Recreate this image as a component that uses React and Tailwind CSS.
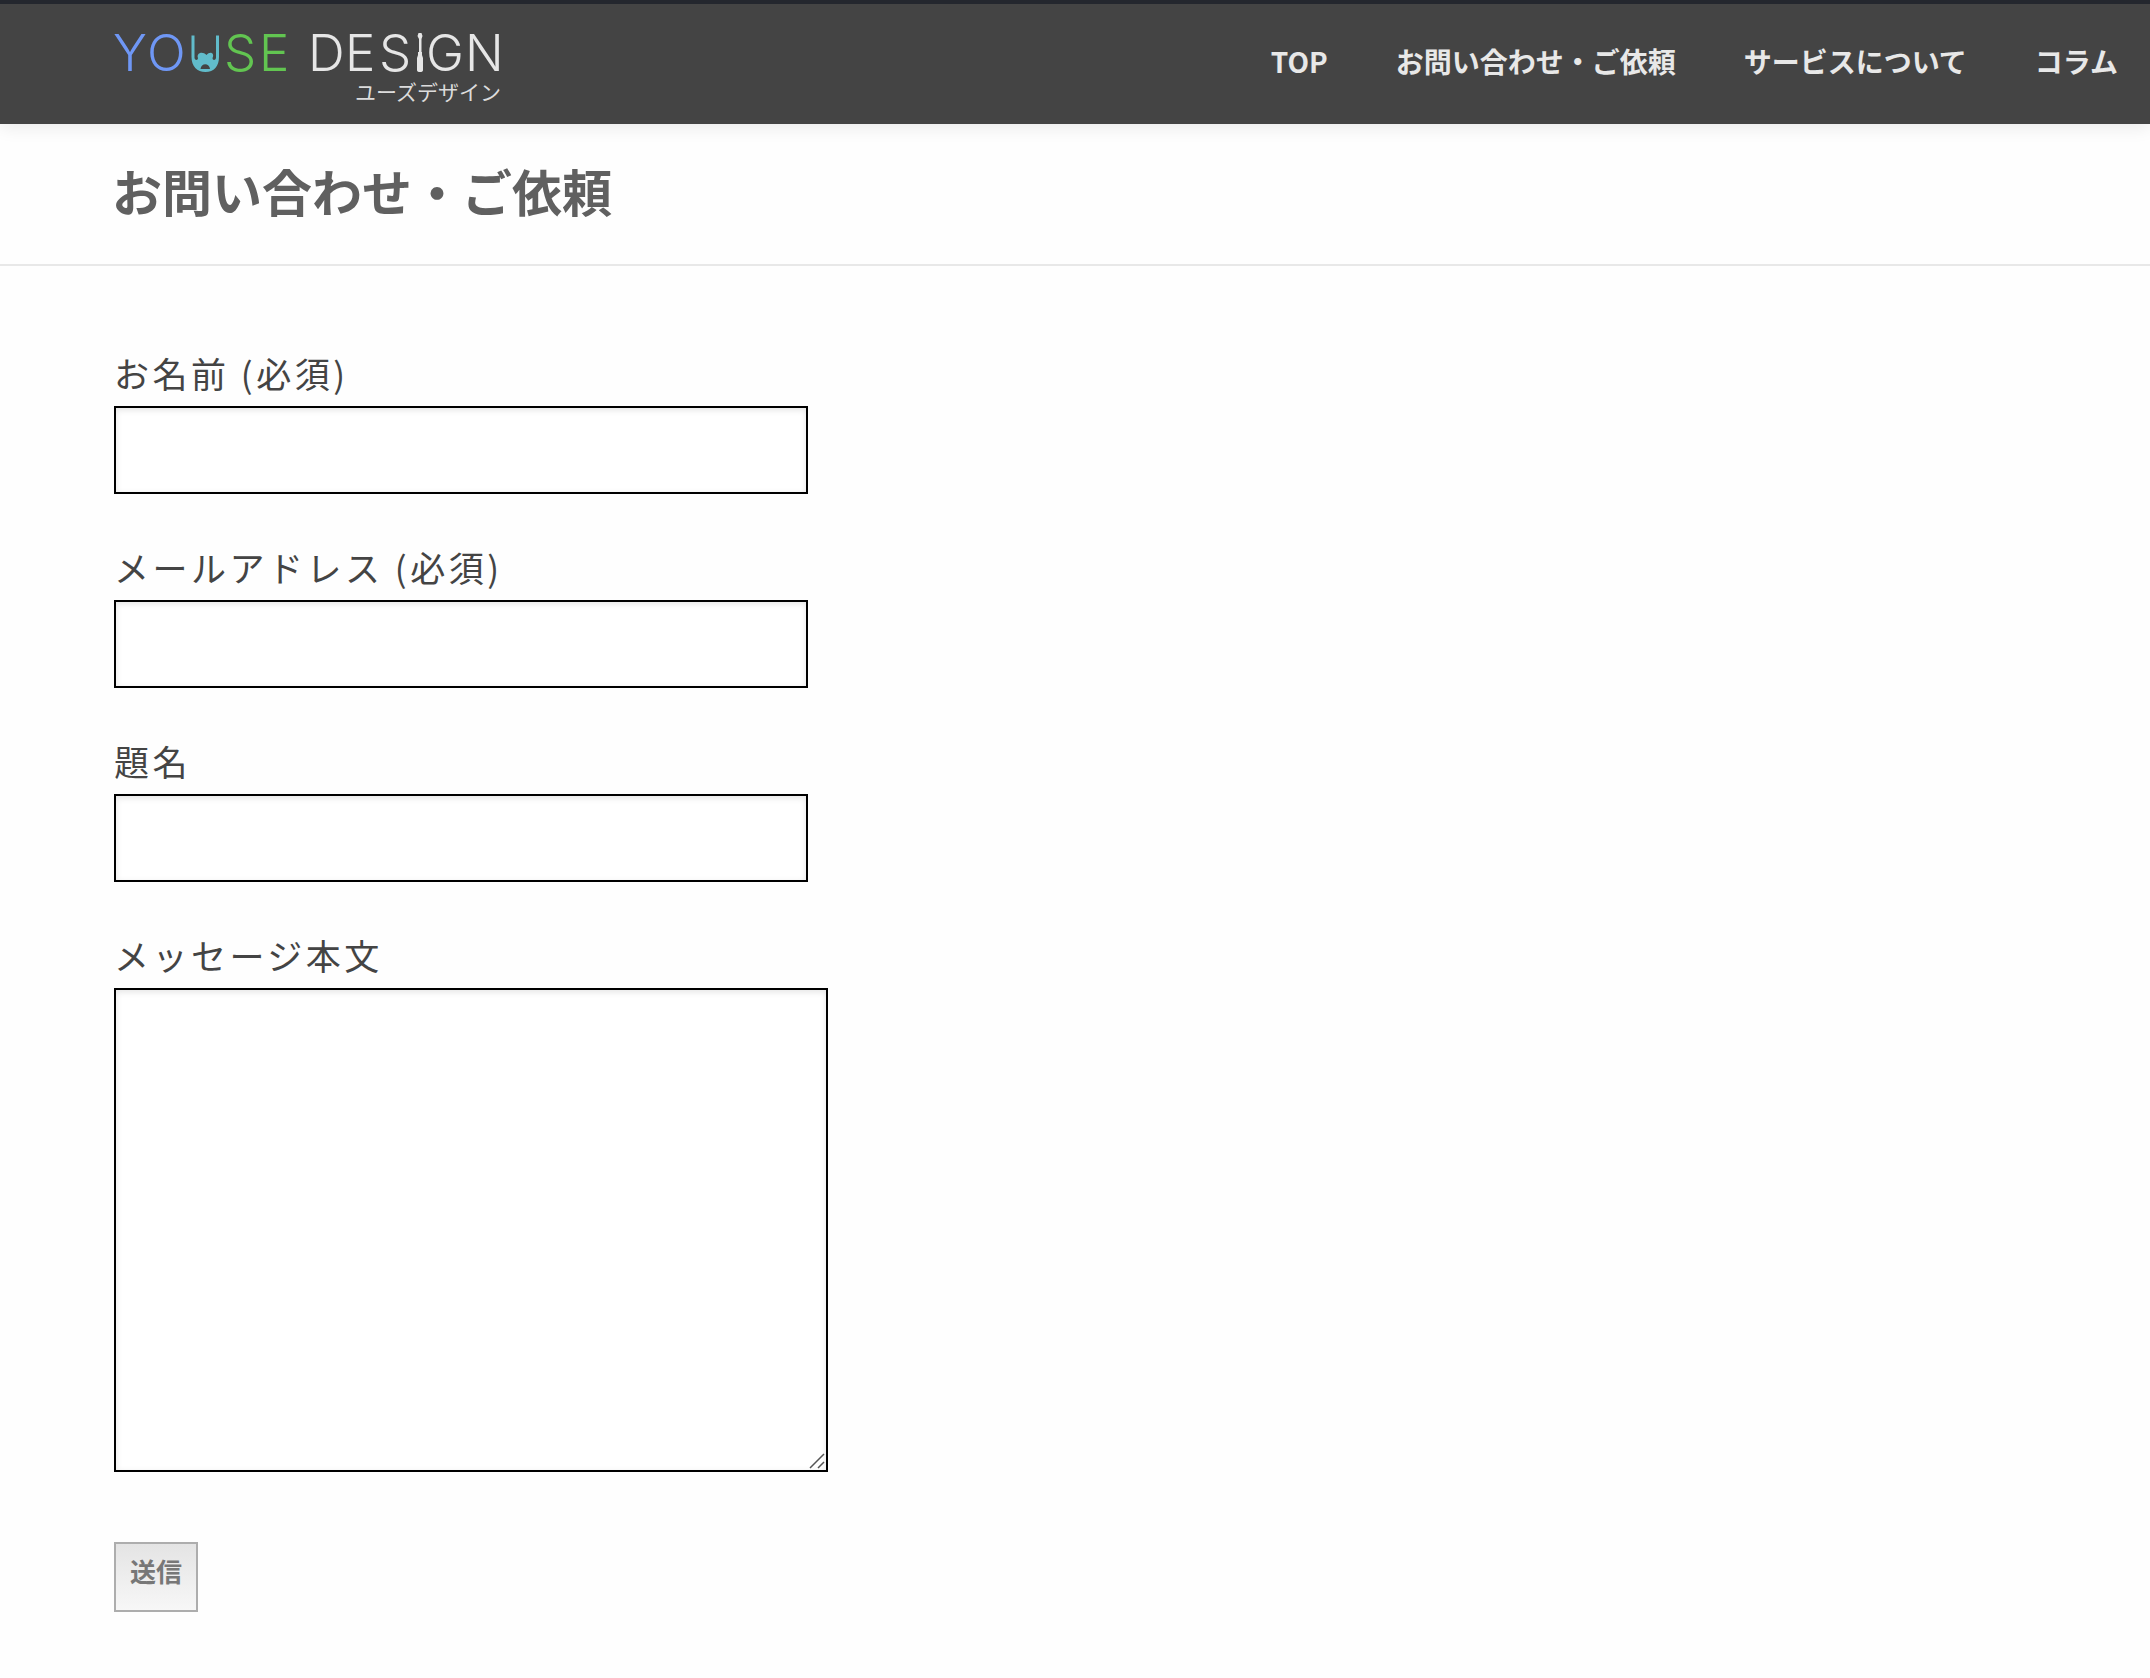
const NAV = ["TOP", "お問い合わせ・ご依頼", "サービスについて", "コラム"];

const FIELDS = [
  { id: "name", label: "お名前 (必須)", type: "text" },
  { id: "email", label: "メールアドレス (必須)", type: "email" },
  { id: "subject", label: "題名", type: "text" },
];

const BOX =
  "block max-w-full border-2 border-black bg-white px-4 text-3xl shadow-[inset_0_2px_6px_rgba(0,0,0,0.11)] outline-none";

const LABEL = "block pb-1.5 text-[35px] leading-[54px] tracking-widest";

function Logo() {
  return (
    <svg
      width="398"
      height="96"
      viewBox="-4 -8 398 96"
      role="img"
      aria-label="YOUSE DESIGN ユーズデザイン"
      className="block font-['Inter','Noto_Sans_CJK_JP',sans-serif] font-light"
    >
      <g fontSize="51" fill="#e6e6e6">
        <text y="47" x="-1 33" fill="#6f97f5">YO</text>
        <text y="47" x="110 145" fill="#62c551">SE</text>
        <text y="47" x="194 231 265">DES</text>
        <text y="47" x="312 351">GN</text>
      </g>
      <path
        d="M77.500 11.500V33C77.500 42 83 48 91.500 48S105 42 105 33V11.500H102V34C101.500 36.500 98.500 36.500 98.500 34C101 29 96 26.500 92.500 31C88.500 26.500 82 29 84 34C84 36.500 81 36.500 80.500 34V11.500ZM86.500 45C87 38.500 95.500 38.500 96 45Z"
        fill="#61bccb"
        fillRule="evenodd"
      />
      <path
        d="M304.500 9H307.500L308.500 12L307.500 15V28H308V31L309 34V46Q309 48 306 48T303 46V34L304 31V28H305V15L303.500 12Z"
        fill="#e6e6e6"
      />
      <text x="387" y="76" textAnchor="end" fontSize="21" className="font-normal" fill="#dcdcdc">
        ユーズデザイン
      </text>
    </svg>
  );
}

export default function App() {
  return (
    <div className="min-h-screen bg-[#fefefe] font-['Noto_Sans_CJK_JP',sans-serif] text-[#444]">
      <header className="flex h-[124px] items-center justify-between border-t-4 border-[#24272e] bg-[#444] pr-8 pl-[110px] shadow-[0_4px_16px_rgba(0,0,0,0.08)]">
        <a href="#top" className="shrink-0">
          <Logo />
        </a>
        <nav className="pb-1.5">
          <ul className="flex gap-[68px] text-[28px] leading-10 font-bold whitespace-nowrap text-[#e8e8e8]">
            {NAV.map((item) => (
              <li key={item}>
                <a href="#top">{item}</a>
              </li>
            ))}
          </ul>
        </nav>
      </header>

      <div className="border-b-2 border-[#e8e8e8] pt-[30px] pb-[38px] pl-28">
        <h1 className="text-[50px] leading-[72px] font-bold text-[#606060]">
          お問い合わせ・ご依頼
        </h1>
      </div>

      <form className="flex flex-col items-start pt-20 pr-8 pb-16 pl-[114px]">
        {FIELDS.map((f) => (
          <div key={f.id} className="mb-[46px]">
            <label htmlFor={f.id} className={LABEL}>
              {f.label}
            </label>
            <input id={f.id} type={f.type} className={`${BOX} h-[88px] w-[694px]`} />
          </div>
        ))}
        <div className="mb-[70px]">
          <label htmlFor="message" className={LABEL}>
            メッセージ本文
          </label>
          <div className="relative w-fit">
            <textarea
              id="message"
              className={`${BOX} h-[484px] w-[714px] resize [&::-webkit-resizer]:bg-transparent`}
            />
            <svg
              width="16"
              height="16"
              viewBox="0 0 16 16"
              aria-hidden="true"
              className="pointer-events-none absolute right-[3px] bottom-[3px]"
            >
              <path d="M1 15L15 1M9 15L15 9" stroke="#555" strokeWidth="1.500" fill="none" />
            </svg>
          </div>
        </div>
        <button
          type="submit"
          className="border-2 border-[#adadad] bg-linear-to-b from-[#e4e4e4] to-[#f7f7f7] px-[14px] pt-2 pb-5 text-[26px] leading-[38px] font-bold text-[#777]"
        >
          送信
        </button>
      </form>
    </div>
  );
}
